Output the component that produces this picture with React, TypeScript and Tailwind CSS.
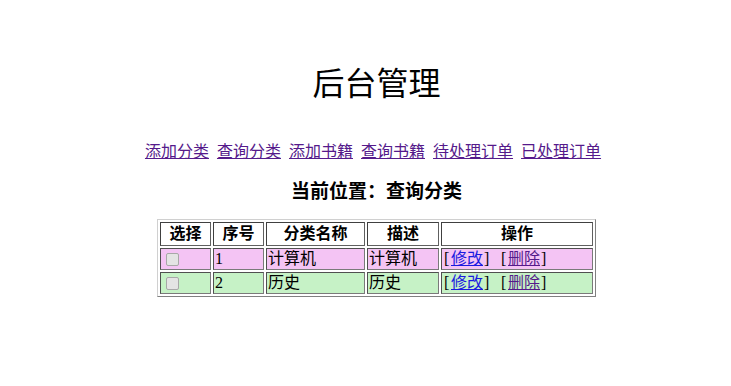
import React from "react";

const font = { fontFamily: '"Liberation Serif", "Noto Sans CJK SC", serif' };

const links = ["添加分类", "查询分类", "添加书籍", "查询书籍", "待处理订单", "已处理订单"];

const rows = [
  { id: "1", name: "计算机", desc: "计算机", bg: "bg-[#f4c4f4]" },
  { id: "2", name: "历史", desc: "历史", bg: "bg-[#c6f2c6]" },
];

const th =
  "h-[24px] p-[1px] border border-t-[#404040] border-l-[#404040] border-b-[#606060] border-r-[#606060] text-center font-bold text-[16px] leading-[20px] text-black";
const td =
  "h-[22px] p-[1px] border border-t-[#505050] border-l-[#505050] border-b-[#7a7a7a] border-r-[#7a7a7a] text-left text-[16px] leading-[18px] text-black";

export default function App() {
  return (
    <div className="w-[731px] h-[386px] bg-white flex flex-col items-center pl-[22px]" style={font}>
      <h1 className="mt-[66px] text-[32px] leading-[37px] font-normal text-black">后台管理</h1>
      <div className="mt-[40px] mr-[7px] flex gap-[8px] text-[16px] leading-[18px]">
        {links.map((l) => (
          <a key={l} href="#" className="text-[#551a8b] underline">
            {l}
          </a>
        ))}
      </div>
      <h3 className="mt-[20px] text-[19px] leading-[22px] font-bold text-black">当前位置：查询分类</h3>
      <table className="mt-[16px] border-separate border-spacing-[2px] border border-t-[#d0d0d0] border-l-[#d0d0d0] border-b-[#808080] border-r-[#808080]">
        <thead>
          <tr>
            <th className={`${th} w-[51px]`}>选择</th>
            <th className={`${th} w-[51px]`}>序号</th>
            <th className={`${th} w-[99px]`}>分类名称</th>
            <th className={`${th} w-[72px]`}>描述</th>
            <th className={`${th} w-[152px]`}>操作</th>
          </tr>
        </thead>
        <tbody>
          {rows.map((r) => (
            <tr key={r.id} className={r.bg}>
              <td className={td}>
                <span className="block ml-[4px] w-[13px] h-[13px] rounded-[2px] border border-[#a8a8a8] bg-[#e4e4e4]" />
              </td>
              <td className={td}>{r.id}</td>
              <td className={td}>{r.name}</td>
              <td className={td}>{r.desc}</td>
              <td className={td}>
                <span className="inline-block w-[8px] pl-[1px]">[</span>
                <a href="#" className="text-[#1a1ae0] underline">修改</a>
                <span className="inline-block w-[8px] pl-[1px]">]</span>
                <span className="inline-block w-[9px]" />
                <span className="inline-block w-[8px] pl-[1px]">[</span>
                <a href="#" className="text-[#551a8b] underline">删除</a>
                <span className="inline-block w-[8px] pl-[1px]">]</span>
              </td>
            </tr>
          ))}
        </tbody>
      </table>
    </div>
  );
}
